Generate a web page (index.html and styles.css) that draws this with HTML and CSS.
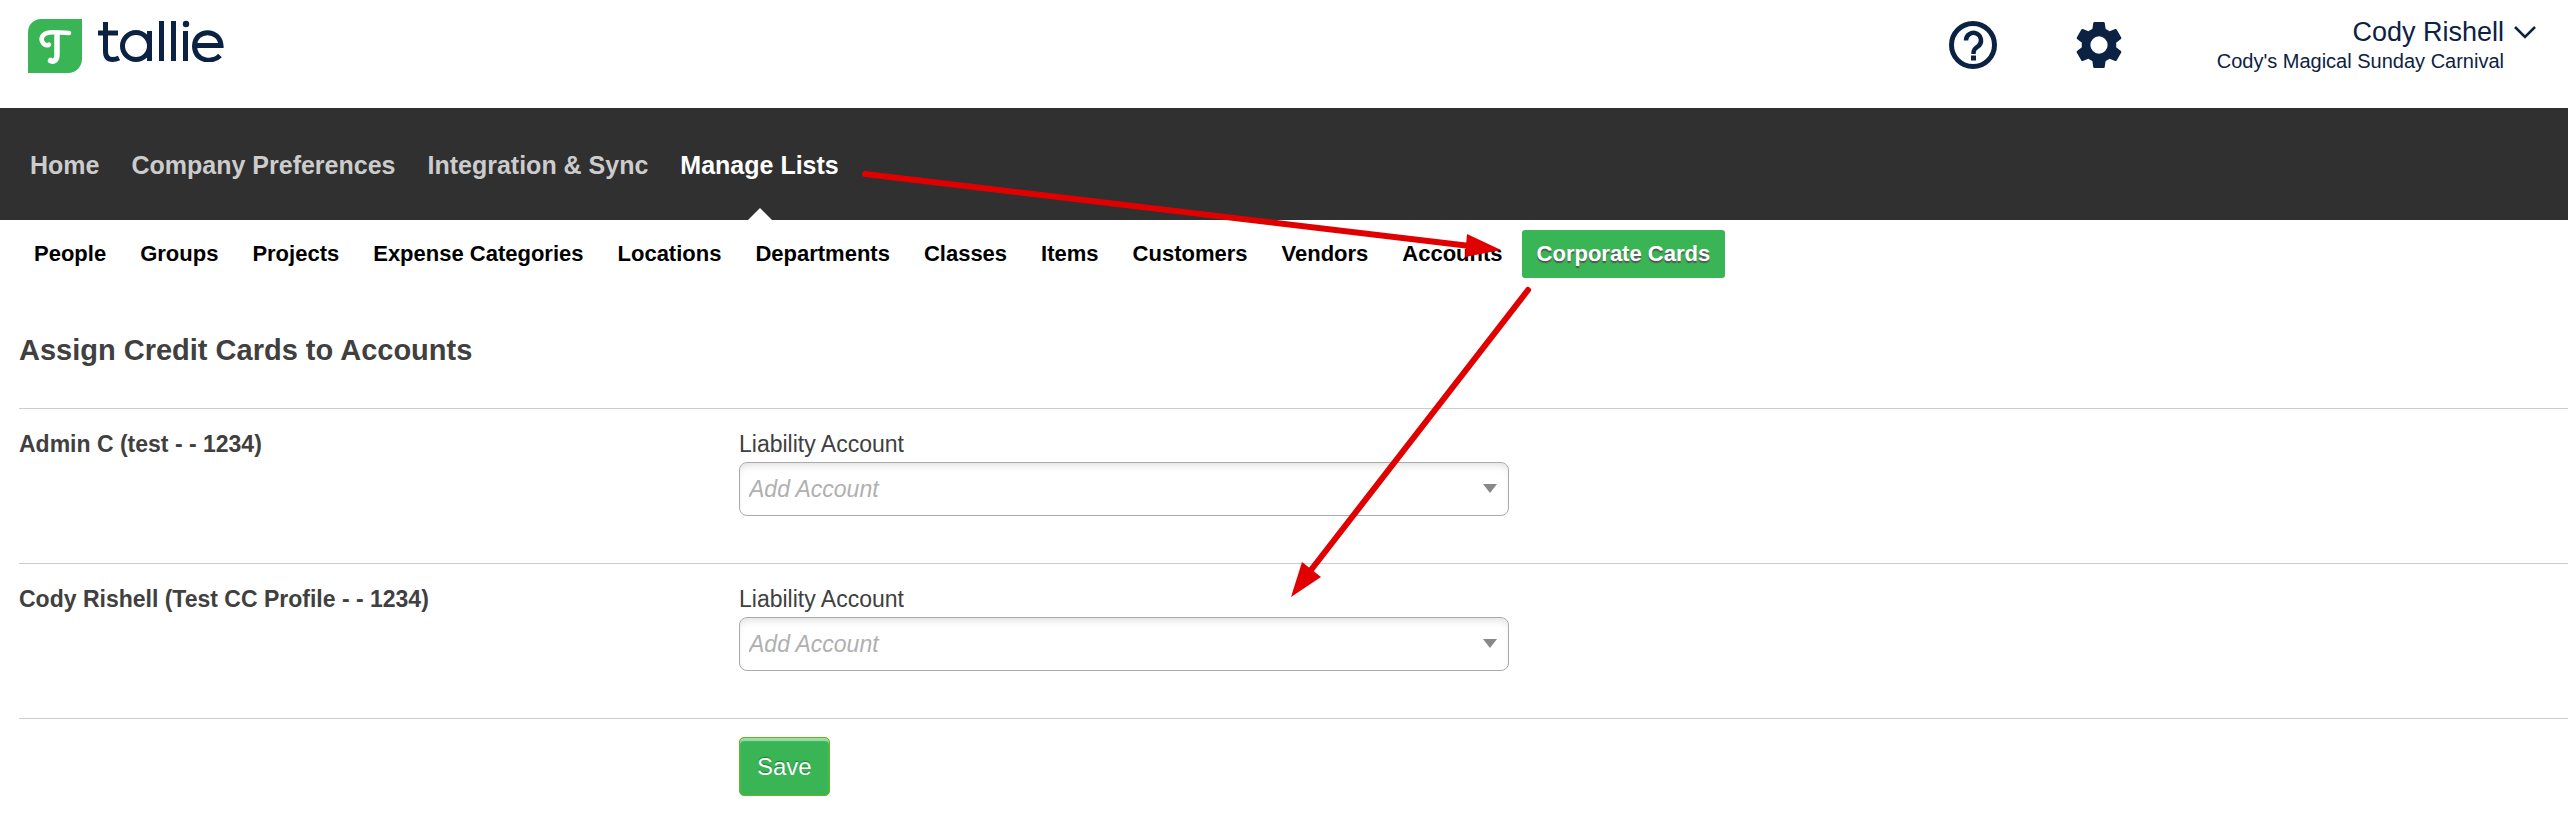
FILE: index.html
```html
<!DOCTYPE html>
<html lang="en">
<head>
    <meta charset="UTF-8">
    <meta name="viewport" content="width=device-width, initial-scale=1.0">
    <title>Tallie - Corporate Cards</title>
    <link rel="stylesheet" href="styles.css">
</head>
<body>
    <header class="header">
        <a class="logo" href="#" aria-label="tallie">
            <svg class="logo-mark" viewBox="0 0 54 54">
                <path d="M13 0H54V40A14 14 0 0 1 40 54H0V13A13 13 0 0 1 13 0Z" fill="#39b556"/>
                <path d="M41 14C33 14 27 12.500 21 13.500C14 14.500 12 20 15 24C17 26.500 20 27 21 25.500" fill="none" stroke="#fff" stroke-width="4.500" stroke-linecap="round"/>
                <path d="M29 15V35C29 41 26 43.500 22.500 41.500" fill="none" stroke="#fff" stroke-width="5.500" stroke-linecap="round"/>
            </svg>
            <svg class="logo-word" viewBox="0 0 126 42" fill="none" stroke="#0c2243" stroke-width="5">
                <path d="M7.500 2V31Q7.500 39.500 14.500 39.500Q18 39.500 21 38M0 13H20"/>
                <circle cx="38" cy="26" r="13.500"/>
                <path d="M51.500 11V41M63.500 1V41M75.500 1V41M87.500 11V41"/>
                <circle cx="88" cy="4" r="3.200" fill="#0c2243" stroke="none"/>
                <path d="M96 25.500H123C122 8.500 97 8 96.500 26C97 42 115 43 122 35.500"/>
            </svg>
        </a>
        <div class="header-right">
            <a class="icon" href="#" aria-label="Help">
                <svg viewBox="0 0 48 48" fill="none" stroke="#0c2243">
                    <circle cx="24" cy="24" r="21.500" stroke-width="5"/>
                    <path d="M17 19.500A7.500 7.500 0 1 1 29.500 25C26 27.500 24.500 28.500 24.500 33" stroke-width="4.500"/>
                    <path d="M24.500 34.500V39.500" stroke-width="5"/>
                </svg>
            </a>
            <a class="icon" href="#" aria-label="Settings">
                <svg viewBox="2 2 20 20" fill="#0c2243">
                    <path d="M19.140 12.940c.04-.3.06-.61.06-.94s-.02-.64-.07-.94l2.030-1.580c.18-.14.23-.41.12-.61l-1.920-3.320c-.12-.22-.37-.29-.59-.22l-2.390.96c-.5-.38-1.030-.7-1.620-.94l-.36-2.540c-.04-.24-.24-.41-.48-.41h-3.840c-.24 0-.43.17-.47.41l-.36 2.540c-.59.24-1.130.57-1.620.94l-2.390-.96c-.22-.08-.47 0-.59.22L2.740 8.870c-.12.21-.08.47.12.61l2.030 1.580c-.05.3-.09.63-.09.94s.02.64.07.94l-2.030 1.580c-.18.14-.23.41-.12.61l1.920 3.320c.12.22.37.29.59.22l2.390-.96c.5.38 1.030.7 1.620.94l.36 2.540c.05.24.24.41.48.41h3.840c.24 0 .44-.17.47-.41l.36-2.540c.59-.24 1.130-.56 1.620-.94l2.390.96c.22.08.47 0 .59-.22l1.920-3.320c.12-.22.07-.47-.12-.61zM12 15.600a3.600 3.600 0 1 1 0-7.200 3.600 3.600 0 0 1 0 7.200z"/>
                </svg>
            </a>
            <button class="account" type="button">
                <span class="account-text">
                    <span class="user">Cody Rishell</span>
                    <span class="company">Cody's Magical Sunday Carnival</span>
                </span>
                <svg class="chevron" viewBox="0 0 22 13"><path d="M1 1L11 11L21 1" fill="none" stroke="#0c2243" stroke-width="2.500"/></svg>
            </button>
        </div>
    </header>

    <nav class="nav">
        <a href="#">Home</a>
        <a href="#">Company Preferences</a>
        <a href="#">Integration &amp; Sync</a>
        <a class="active" href="#">Manage Lists</a>
    </nav>

    <nav class="subnav">
        <a href="#">People</a>
        <a href="#">Groups</a>
        <a href="#">Projects</a>
        <a href="#">Expense Categories</a>
        <a href="#">Locations</a>
        <a href="#">Departments</a>
        <a href="#">Classes</a>
        <a href="#">Items</a>
        <a href="#">Customers</a>
        <a href="#">Vendors</a>
        <a href="#">Accounts</a>
        <a class="active" href="#">Corporate Cards</a>
    </nav>

    <main class="content">
        <h1>Assign Credit Cards to Accounts</h1>
        <form>
            <div class="row">
                <h2>Admin C (test - - 1234)</h2>
                <div class="field">
                    <label for="account1">Liability Account</label>
                    <div class="select">
                        <select id="account1">
                            <option>Add Account</option>
                        </select>
                    </div>
                </div>
            </div>
            <div class="row">
                <h2>Cody Rishell (Test CC Profile - - 1234)</h2>
                <div class="field">
                    <label for="account2">Liability Account</label>
                    <div class="select">
                        <select id="account2">
                            <option>Add Account</option>
                        </select>
                    </div>
                </div>
            </div>
            <div class="row actions">
                <button class="save" type="submit">Save</button>
            </div>
        </form>
    </main>

    <!-- arrows: Manage Lists -> Corporate Cards -> account field -->
    <svg class="arrows" width="1600" height="620" viewBox="0 0 1600 620" fill="#e00000" stroke="#e00000" stroke-width="6" stroke-linecap="round">
        <path d="M865 174L1470 246"/>
        <path d="M1467 234L1501 250L1465 257Z" stroke="none"/>
        <path d="M1528 290L1311 570"/>
        <path d="M1302 562L1321 577L1291 597Z" stroke="none"/>
    </svg>
</body>
</html>
```
FILE: styles.css
```css
* {
    box-sizing: border-box;
}
body {
    margin: 0;
    font-family: "Liberation Sans", Arial, sans-serif;
    background-color: #fff;
    color: #404040;
    position: relative;
}
a {
    text-decoration: none;
}
.header {
    display: flex;
    justify-content: space-between;
    align-items: flex-start;
    height: 108px;
    padding: 16px 32px 0 28px;
}
.logo {
    display: flex;
    gap: 16px;
}
.logo-mark {
    width: 54px;
    height: 54px;
    margin-top: 3px;
}
.logo-word {
    width: 126px;
    height: 42px;
    margin-top: 4px;
}
.header-right {
    display: flex;
    align-items: flex-start;
}
.icon {
    width: 48px;
    height: 48px;
    margin: 5px 78px 0 0;
}
.icon svg {
    display: block;
    width: 48px;
    height: 48px;
}
.account {
    display: flex;
    gap: 10px;
    margin-left: 16px;
    padding: 0;
    border: 0;
    background: none;
    font-family: inherit;
    color: #0c2243;
    text-align: right;
    cursor: pointer;
}
.account-text {
    display: flex;
    flex-direction: column;
}
.user {
    font-size: 27px;
    line-height: 32px;
}
.company {
    font-size: 20px;
    line-height: 26px;
}
.chevron {
    width: 22px;
    height: 13px;
    margin-top: 10px;
}
.nav {
    display: flex;
    gap: 32px;
    height: 112px;
    padding-left: 30px;
    background-color: #303030;
    font-size: 25px;
    font-weight: bold;
    line-height: 114px;
}
.nav a {
    color: #ccc;
}
.nav .active {
    position: relative;
    color: #fff;
}
.nav .active::after {
    content: "";
    position: absolute;
    left: 50%;
    bottom: 0;
    margin-left: -12px;
    border: 12px solid transparent;
    border-top: 0;
    border-bottom-color: #fff;
}
.subnav {
    display: flex;
    gap: 4px;
    padding: 10px 19px;
    font-size: 22px;
    font-weight: bold;
    line-height: 48px;
}
.subnav a {
    padding: 0 15px;
    border-radius: 3px;
    color: #000;
}
.subnav .active {
    background-color: #39b556;
    color: #fff;
    text-shadow: 0 2px 1px #555;
}
.content {
    padding: 44px 0 0 19px;
}
h1 {
    margin: 0;
    font-size: 29px;
    line-height: 36px;
}
h2 {
    margin: 0;
    font-size: 23px;
    line-height: 28px;
}
form {
    margin-top: 40px;
}
.row {
    display: grid;
    grid-template-columns: 720px 1fr;
    min-height: 155px;
    padding-top: 21px;
    border-top: 1px solid #ccc;
}
.field {
    display: flex;
    flex-direction: column;
    gap: 4px;
    width: 770px;
}
label {
    font-size: 23px;
    line-height: 28px;
}
.select {
    position: relative;
}
.select::after {
    content: "";
    position: absolute;
    top: 22px;
    right: 12px;
    border: 7px solid transparent;
    border-top: 9px solid #888;
    border-bottom: 0;
    pointer-events: none;
}
select {
    appearance: none;
    width: 100%;
    height: 54px;
    padding: 0 9px;
    border: 1px solid #aaa;
    border-radius: 8px;
    background-color: transparent;
    box-shadow: inset 0 6px 8px -4px #ddd;
    font-family: inherit;
    font-size: 23px;
    font-style: italic;
    color: #b0b0b0;
}
.actions {
    min-height: 100px;
    padding-top: 18px;
}
.save {
    grid-column: 2;
    justify-self: start;
    align-self: start;
    height: 59px;
    padding: 0 17px;
    border: 1px solid #6ab41c;
    border-radius: 5px;
    background-color: #39b556;
    box-shadow: inset 0 3px 1px #9ddcab;
    font-family: inherit;
    font-size: 24px;
    color: #fff;
    text-shadow: 0 -1px 1px #1c7a33;
    cursor: pointer;
}
.arrows {
    position: absolute;
    top: 0;
    left: 0;
    pointer-events: none;
}
```
